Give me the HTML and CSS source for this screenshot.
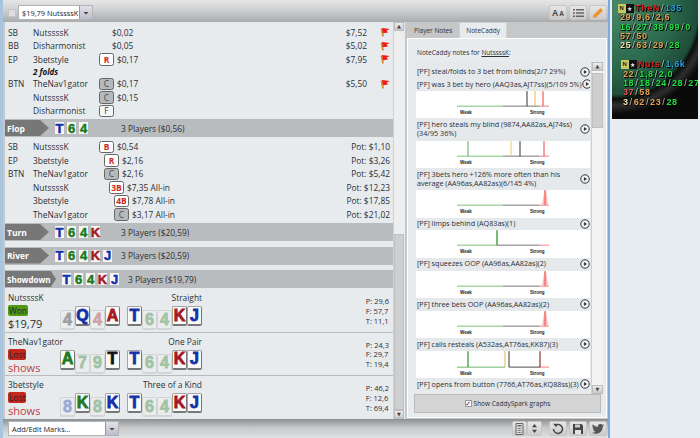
FILE: index.html
```html
<!DOCTYPE html>
<html lang="en">
<head>
<meta charset="utf-8">
<title>Hand replay</title>
<link rel="stylesheet" href="styles.css">
</head>
<body>
<svg class="sprite" xmlns="http://www.w3.org/2000/svg">
  <symbol id="flag" viewBox="0 0 10 10"><path d="M1.5 1.5 L3 9.5" stroke="#d08a30" stroke-width="1.8" fill="none"/><path d="M2 1 L9.8 2 L6.5 3.5 L8 5.5 L3 6.2 Z" fill="#f01818"/></symbol>
  <symbol id="play" viewBox="0 0 10 10"><circle cx="5" cy="5" r="4.2" fill="#f4f5f6" stroke="#333" stroke-width="1"/><path d="M3.9 2.9 L7 5 L3.9 7.1 Z" fill="#333"/></symbol>
  <symbol id="arrow" viewBox="0 0 8 8"><path d="M1.5 3 L6.5 3 L4 5.5 Z" fill="#444"/></symbol>
</svg>
<div class="desktop">
  <div class="window">
    <header class="topbar">
      <span class="check-off"></span>
      <div class="combo combo-top"><span class="combo-text">$19,79 NutssssK</span><span class="combo-btn"><svg width="8" height="8"><use href="#arrow"/></svg></span></div>
      <div class="tools">
        <button class="tool"><span class="aa">A<small>A</small></span></button>
        <button class="tool"><svg width="11" height="10" viewBox="0 0 11 10"><path d="M0 1h2v1.5H0zM3 1h8v1.5H3zM0 4.2h2v1.5H0zM3 4.2h8v1.5H3zM0 7.4h2v1.5H0zM3 7.4h8v1.5H3z" fill="#666"/></svg></button>
        <button class="tool"><svg width="12" height="12" viewBox="0 0 12 12"><path d="M8.5 1 L11 3.5 L4 10.5 L1 11 L1.500 8 Z" fill="#f0922a"/></svg></button>
      </div>
    </header>
    <main class="main">
      <section class="left">
        <div class="hand">
          <div class="street first">
            <div class="row"><span class="pos">SB</span><span class="name">NutssssK</span><span class="amt blind">$0,02</span><span class="stack">$7,52</span><svg class="flag"><use href="#flag"/></svg></div>
            <div class="row"><span class="pos">BB</span><span class="name">Disharmonist</span><span class="amt blind">$0,05</span><span class="stack">$5,02</span><svg class="flag"><use href="#flag"/></svg></div>
            <div class="row"><span class="pos">EP</span><span class="name">3betstyle</span><span class="act red">R</span><span class="amt">$0,17</span><span class="stack">$7,95</span><svg class="flag"><use href="#flag"/></svg></div>
            <div class="row folds"><span class="pos"></span><span class="fold-text">2 folds</span></div>
            <div class="row"><span class="pos">BTN</span><span class="name">TheNav1gator</span><span class="act call">C</span><span class="amt">$0,17</span><span class="stack">$5,50</span><svg class="flag"><use href="#flag"/></svg></div>
            <div class="row"><span class="pos"></span><span class="name">NutssssK</span><span class="act call">C</span><span class="amt">$0,15</span></div>
            <div class="row"><span class="pos"></span><span class="name">Disharmonist</span><span class="act fold">F</span></div>
          </div>
          <div class="band band-flop"><span class="tag">Flop</span><span class="board"><i class="c b">T</i><i class="c g">6</i><i class="c g">4</i></span><span class="players">3 Players ($0,56)</span></div>
          <div class="street">
            <div class="row"><span class="pos">SB</span><span class="name">NutssssK</span><span class="act red">B</span><span class="amt">$0,54</span><span class="pot">Pot: $1,10</span></div>
            <div class="row"><span class="pos">EP</span><span class="name">3betstyle</span><span class="act red in1">R</span><span class="amt">$2,16</span><span class="pot">Pot: $3,26</span></div>
            <div class="row"><span class="pos">BTN</span><span class="name">TheNav1gator</span><span class="act call in1">C</span><span class="amt">$2,16</span><span class="pot">Pot: $5,42</span></div>
            <div class="row"><span class="pos"></span><span class="name">NutssssK</span><span class="act red in2">3B</span><span class="amt">$7,35 All-in</span><span class="pot">Pot: $12,23</span></div>
            <div class="row"><span class="pos"></span><span class="name">3betstyle</span><span class="act red in3">4B</span><span class="amt">$7,78 All-in</span><span class="pot">Pot: $17,85</span></div>
            <div class="row"><span class="pos"></span><span class="name">TheNav1gator</span><span class="act call in3">C</span><span class="amt">$3,17 All-in</span><span class="pot">Pot: $21,02</span></div>
          </div>
          <div class="band"><span class="tag">Turn</span><span class="board"><i class="c b">T</i><i class="c g">6</i><i class="c g">4</i><i class="c r">K</i></span><span class="players">3 Players ($20,59)</span></div>
          <div class="band"><span class="tag">River</span><span class="board"><i class="c b">T</i><i class="c g">6</i><i class="c g">4</i><i class="c r">K</i><i class="c b">J</i></span><span class="players">3 Players ($20,59)</span></div>
          <div class="band band-last"><span class="tag tag-wide">Showdown</span><span class="board"><i class="c b">T</i><i class="c g">6</i><i class="c g">4</i><i class="c r">K</i><i class="c b">J</i></span><span class="players">3 Players ($19,79)</span></div>

          <div class="result">
            <div class="who"><div class="pname">NutssssK</div><div class="won">Won</div><div class="money">$19,79</div></div>
            <div class="hands">
              <div class="rank">Straight</div>
              <div class="cards"><i class="s k dim">4</i><i class="s b">Q</i><i class="s r dim">4</i><i class="s r">A</i><i class="gap"></i><i class="s b">T</i><i class="s g dim">6</i><i class="s g dim">4</i><i class="s r">K</i><i class="s b">J</i></div>
            </div>
            <div class="pct"><div>P: 29,6</div><div>F: 57,7</div><div>T: 11,1</div></div>
          </div>
          <div class="result">
            <div class="who"><div class="pname">TheNav1gator</div><div class="lost">Lost</div><div class="shows">shows</div></div>
            <div class="hands">
              <div class="rank">One Pair</div>
              <div class="cards"><i class="s g">A</i><i class="s g dim">7</i><i class="s g dim">9</i><i class="s k">T</i><i class="gap"></i><i class="s b">T</i><i class="s g dim">6</i><i class="s g dim">4</i><i class="s r">K</i><i class="s b">J</i></div>
            </div>
            <div class="pct"><div>P: 24,3</div><div>F: 29,7</div><div>T: 19,4</div></div>
          </div>
          <div class="result">
            <div class="who"><div class="pname">3betstyle</div><div class="lost">Lost</div><div class="shows">shows</div></div>
            <div class="hands">
              <div class="rank">Three of a Kind</div>
              <div class="cards"><i class="s b dim">8</i><i class="s g">K</i><i class="s g dim">8</i><i class="s b">K</i><i class="gap"></i><i class="s b">T</i><i class="s g dim">6</i><i class="s g dim">4</i><i class="s r">K</i><i class="s b">J</i></div>
            </div>
            <div class="pct"><div>P: 46,2</div><div>F: 12,6</div><div>T: 69,4</div></div>
          </div>
        </div>
        <div class="vbar"><span class="vbtn">▲</span><span class="vtrack"><span class="vthumb"></span></span><span class="vbtn">▼</span></div>
      </section>

      <section class="right">
        <nav class="tabs"><span class="tab">Player Notes</span><span class="tab tab-on">NoteCaddy</span></nav>
        <div class="pane">
          <div class="pane-title">NoteCaddy notes for <u>NutssssK</u>:</div>
          <div class="list-wrap">
            <div class="notes">
              <div class="note-h h-first"><span>[PF] steal/folds to 3 bet from blinds(2/7 29%)</span><svg class="play"><use href="#play"/></svg></div>
              <div class="note-h"><span>[PF] was 3 bet by hero (AAQ3as,AJT7ss)(5/109 5%)</span><svg class="play"><use href="#play"/></svg></div>
              <svg class="graph" viewBox="0 0 174 27"><path d="M41 15H87" stroke="#7fbf7f"/><path d="M87 15H123" stroke="#777"/><path d="M123 15H133" stroke="#f08080"/><path d="M111 0V15" stroke="#333"/><path d="M119 0V15" stroke="#f0b040"/><path d="M127 0V15" stroke="#f04040"/><text x="44" y="23">Weak</text><text x="114" y="23">Strong</text></svg>
              <div class="note-h h-two"><span>[PF] hero steals my blind (9874,AA82as,AJ74ss)<br>(34/95 36%)</span><svg class="play"><use href="#play"/></svg></div>
              <svg class="graph" viewBox="0 0 174 27"><path d="M41 15H87" stroke="#7fbf7f"/><path d="M87 15H123" stroke="#777"/><path d="M123 15H133" stroke="#f08080"/><path d="M52 0V15" stroke="#5aa85a"/><path d="M95 0V15" stroke="#f0c878"/><path d="M104 0V15" stroke="#333"/><path d="M128 0V15" stroke="#f04040"/><text x="44" y="23">Weak</text><text x="114" y="23">Strong</text></svg>
              <div class="note-h h-two"><span>[PF] 3bets hero +126% more often than his<br>average (AA96as,AA82as)(6/145 4%)</span><svg class="play"><use href="#play"/></svg></div>
              <svg class="graph" viewBox="0 0 174 27"><path d="M41 15H87" stroke="#7fbf7f"/><path d="M87 15H123" stroke="#777"/><path d="M123 15H133" stroke="#f08080"/><path d="M126 15L128.500 0H130L132 15Z" fill="#fbb"/><path d="M129 0V15" stroke="#f05050"/><text x="44" y="23">Weak</text><text x="114" y="23">Strong</text></svg>
              <div class="note-h"><span>[PF] limps behind (AQ83as)(1)</span><svg class="play"><use href="#play"/></svg></div>
              <svg class="graph" viewBox="0 0 174 27"><path d="M41 15H81" stroke="#7fbf7f"/><path d="M81 15H123" stroke="#777"/><path d="M123 15H133" stroke="#f08080"/><path d="M81 0V15" stroke="#3f9f3f" stroke-width="1.400"/><text x="44" y="23">Weak</text><text x="114" y="23">Strong</text></svg>
              <div class="note-h"><span>[PF] squeezes OOP (AA96as,AA82as)(2)</span><svg class="play"><use href="#play"/></svg></div>
              <svg class="graph" viewBox="0 0 174 27"><path d="M41 15H87" stroke="#7fbf7f"/><path d="M87 15H123" stroke="#777"/><path d="M123 15H133" stroke="#f08080"/><path d="M126 15L128.500 0H130L132 15Z" fill="#fbb"/><path d="M129 0V15" stroke="#f05050"/><text x="44" y="23">Weak</text><text x="114" y="23">Strong</text></svg>
              <div class="note-h"><span>[PF] three bets OOP (AA96as,AA82as)(2)</span><svg class="play"><use href="#play"/></svg></div>
              <svg class="graph" viewBox="0 0 174 27"><path d="M41 15H87" stroke="#7fbf7f"/><path d="M87 15H123" stroke="#777"/><path d="M123 15H133" stroke="#f08080"/><path d="M126 15L128.500 0H130L132 15Z" fill="#fbb"/><path d="M129 0V15" stroke="#f05050"/><text x="44" y="23">Weak</text><text x="114" y="23">Strong</text></svg>
              <div class="note-h"><span>[PF] calls resteals (A532as,AT76as,KK87)(3)</span><svg class="play"><use href="#play"/></svg></div>
              <svg class="graph" viewBox="0 0 174 27"><path d="M41 16H89" stroke="#9fcf9f" stroke-width="1.500"/><path d="M93 16H124" stroke="#888" stroke-width="1.500"/><path d="M124 16H133" stroke="#f8a8a8" stroke-width="1.500"/><path d="M52 0V16" stroke="#4f9f4f" stroke-width="1.400"/><path d="M89 0V16" stroke="#f0b040"/><path d="M93 0V16" stroke="#333"/><path d="M124 0V16" stroke="#903030" stroke-width="1.200"/><text x="44" y="24">Weak</text><text x="114" y="24">Strong</text></svg>
              <div class="note-h"><span>[PF] opens from button (7766,AT76as,KQ88ss)(3)</span><svg class="play"><use href="#play"/></svg></div>
            </div>
            <div class="vbar vbar-notes"><span class="vbtn">▲</span><span class="vtrack"><span class="vthumb"></span></span><span class="vbtn">▼</span></div>
          </div>
          <div class="spark"><span class="check-on">✓</span><span>Show CaddySpark graphs</span></div>
        </div>
      </section>
    </main>
    <footer class="bottombar">
      <div class="combo combo-bottom"><span class="combo-text">Add/Edit Marks...</span><span class="combo-btn"><svg width="8" height="8"><use href="#arrow"/></svg></span></div>
      <div class="tools">
        <div class="tool-pair">
          <button class="tool tool-s"><svg width="9" height="12" viewBox="0 0 9 12"><path d="M1 .5h7v11H1z" fill="#ddd" stroke="#666"/><path d="M2.500 2h4v1.500h-4zM2.500 5h1v1h-1zM4 5h1v1H4zM5.500 5h1v1h-1zM2.500 7h1v1h-1zM4 7h1v1H4zM5.500 7h1v1h-1zM2.500 9h1v1h-1zM4 9h1v1H4zM5.500 9h1v1h-1z" fill="#666"/></svg></button>
          <button class="tool tool-s"><svg width="7" height="11" viewBox="0 0 7 11"><path d="M3.500 1L6 4.300H1zM3.500 10L6 6.700H1z" fill="#444"/></svg></button>
        </div>
        <button class="tool"><svg width="12" height="12" viewBox="0 0 12 12"><path d="M3 2.600A4.500 4.500 0 1 1 1.500 6" fill="none" stroke="#444" stroke-width="1.500"/><path d="M1 .8L4.600.8 4.600 4.400Z" fill="#444"/></svg></button>
        <button class="tool"><svg width="12" height="12" viewBox="0 0 12 12"><path d="M1 1h8.500L11 2.500V11H1z" fill="#444"/><path d="M3 1.500h5v3H3z" fill="#ccc"/><path d="M3 7h6v4H3z" fill="#e4e4e4"/></svg></button>
        <button class="tool"><svg width="12" height="10" viewBox="0 0 24 20"><path d="M24 2.400a10 10 0 0 1-2.800.800 5 5 0 0 0 2.200-2.700 10 10 0 0 1-3.100 1.200 4.900 4.900 0 0 0-8.400 4.500A14 14 0 0 1 1.700 1a4.900 4.900 0 0 0 1.500 6.600 5 5 0 0 1-2.200-.6 4.900 4.900 0 0 0 3.900 4.900 5 5 0 0 1-2.200.1 4.900 4.900 0 0 0 4.600 3.400A10 10 0 0 1 0 17.400 14 14 0 0 0 7.500 19.600c9.100 0 14.300-7.700 14-14.600A10 10 0 0 0 24 2.400z" fill="#555"/></svg></button>
      </div>
    </footer>
  </div>
  <aside class="side">
    <div class="hud">
      <div class="hud-block">
        <div class="hud-line"><i class="seat">N</i><i class="star">★</i><b class="t-red">TheN</b><b class="t-w">/</b><b class="t-blue">135</b></div>
        <div class="hud-line ind"><b class="t-or">29</b><b class="t-w">/</b><b class="t-or">9,6</b><b class="t-w">/</b><b class="t-or">2,6</b></div>
        <div class="hud-line ind"><b class="t-gr">16</b><b class="t-w">/</b><b class="t-gr">27</b><b class="t-w">/</b><b class="t-gr">38</b><b class="t-w">/</b><b class="t-gr">99</b><b class="t-w">/</b><b class="t-gr">0</b></div>
        <div class="hud-line ind"><b class="t-or">57</b><b class="t-w">/</b><b class="t-or">50</b></div>
        <div class="hud-line ind"><b class="t-pale">25</b><b class="t-w">/</b><b class="t-or">63</b><b class="t-w">/</b><b class="t-or">29</b><b class="t-w">/</b><b class="t-gr">28</b></div>
      </div>
      <div class="hud-block hud-b2">
        <div class="hud-line"><i class="seat">N</i><i class="star">★</i><b class="t-red">Nuts</b><b class="t-w">/</b><b class="t-blue">1,6k</b></div>
        <div class="hud-line ind"><b class="t-or">22</b><b class="t-w">/</b><b class="t-gr">1,8</b><b class="t-w">/</b><b class="t-gr">2,0</b></div>
        <div class="hud-line ind"><b class="t-gr">18</b><b class="t-w">/</b><b class="t-gr">18</b><b class="t-w">/</b><b class="t-gr">24</b><b class="t-w">/</b><b class="t-gr">28</b><b class="t-w">/</b><b class="t-gr">27</b></div>
        <div class="hud-line ind"><b class="t-red2">37</b><b class="t-w">/</b><b class="t-or">58</b></div>
        <div class="hud-line ind"><b class="t-pale">3</b><b class="t-w">/</b><b class="t-or">62</b><b class="t-w">/</b><b class="t-or">23</b><b class="t-w">/</b><b class="t-gr">28</b></div>
      </div>
    </div>
  </aside>
</div>
</body>
</html>
```

FILE: styles.css
```css
* { box-sizing: border-box; }
html, body { margin: 0; padding: 0; height: 100%; overflow: hidden; }
body { font-family: "Open Sans", "Noto Sans", sans-serif; font-size: 8.4px; color: #2c2f33; background: #e8edf2; }
.sprite { display: none; }
i { font-style: normal; }

.desktop { display: flex; width: 700px; height: 438px; filter: blur(0.3px); }
.window { width: 610px; height: 438px; display: flex; flex-direction: column; border-left: 3px solid #a9c4dd; border-right: 2px solid #7fa9dc; background: #c6c7c8; }

.topbar { height: 22px; flex: none; display: flex; align-items: center; padding: 3px 0 0 5px; background: linear-gradient(#e6e6e6, #d2d3d4 40%, #a9abad); }
.check-off { width: 8px; height: 8px; margin-right: 2px; border: 1px solid #c4c4c4; background: #dedede; }
.combo { display: flex; background: #fff; border: 1px solid #b4b4b4; color: #222; font-size: 7.4px; height: 15px; align-items: center; }
.combo-text { flex: 1; padding-left: 3px; white-space: nowrap; overflow: hidden; }
.combo-btn { width: 13px; height: 100%; display: flex; align-items: center; justify-content: center; background: linear-gradient(#e2e2ec, #bcbccb); border-left: 1px solid #999; }
.combo-top { width: 75px; }
.combo-bottom { width: 111px; }
.tools { margin-left: auto; display: flex; gap: 2px; padding-right: 1px; }
.tool { width: 18px; height: 15px; padding: 0; border: 1px solid #c6c6c6; border-radius: 2px; background: linear-gradient(#e6e6e6, #cbcbcb); display: flex; align-items: center; justify-content: center; }
.aa { font: bold 8.5px "Liberation Sans", sans-serif; color: #444; }
.aa small { font-size: 6.5px; margin-left: 1px; }
.tool-pair { display: flex; margin-right: 5px; }
.tool-s { width: 15px; }

.main { flex: none; height: 397px; display: flex; padding-left: 2px; }
.left { width: 400px; flex: none; display: flex; background: #e8ebee; }
.hand { width: 388px; flex: none; padding-top: 3.5px; }
.vbar { width: 11px; flex: none; display: flex; flex-direction: column; background: #eee; border-left: 1px solid #d0d0d0; }
.vbtn { height: 9px; flex: none; font: 5px/7px "DejaVu Sans", sans-serif; text-align: center; color: #444; background: linear-gradient(#eee, #c8c8c8); border: 1px solid #bbb; }
.vtrack { flex: 1; display: flex; flex-direction: column; justify-content: flex-end; }
.vthumb { height: 176px; background: #cfcfcf; border: 1px solid #c0c0c0; }

.street { padding-bottom: 2px; }
.street.first { padding-bottom: 1.5px; }
.row { display: flex; align-items: center; height: 13.5px; padding-left: 3px; white-space: nowrap; }
.folds { height: 11px; }
.fold-text { font-weight: 700; font-style: italic; color: #111; font-size: 8px; }
.pos { width: 25px; flex: none; }
.name { width: 66px; flex: none; }
.act { width: 15px; height: 12.5px; flex: none; display: flex; align-items: center; justify-content: center; border: 1px solid #666; border-radius: 2.5px; font-size: 8.4px; font-weight: 700; }
.red { background: #fff; color: #d02a20; }
.call { background: #b6b9bc; color: #444; font-weight: 400; }
.fold { background: #f4f5f6; color: #444; font-weight: 400; }
.in1 { margin-left: 5px; }
.in2 { margin-left: 10px; }
.in3 { margin-left: 15px; }
.amt { margin-left: 3px; }
.amt.blind { margin-left: 13px; }
.stack { margin-left: auto; }
.flag { width: 10px; height: 10px; margin: 0 3px 0 13px; }
.pot { margin-left: auto; padding-right: 3px; }

.band { height: 18px; display: flex; align-items: center; background: #b9bcbf; margin-bottom: 5.5px; }
.band-flop { margin-bottom: 3px; }
.band-last { margin-bottom: 1px; }
.tag { width: 44px; height: 16px; flex: none; display: flex; align-items: center; padding-left: 2px; background: #777; color: #fff; font: bold 8.5px "Open Sans", sans-serif; clip-path: polygon(0 0, 80% 0, 100% 50%, 80% 100%, 0 100%); }
.tag-wide { width: 51px; font-size: 8px; clip-path: polygon(0 0, 90% 0, 100% 50%, 90% 100%, 0 100%); }
.board { display: flex; gap: 1px; margin-left: 5px; width: 67px; flex: none; }
.c { width: 11px; height: 14px; display: flex; align-items: center; justify-content: center; background: #f6f6f6; border: 1px solid #bbb; border-radius: 1px; font: bold 13px "Liberation Sans", sans-serif; -webkit-text-stroke: 0.5px currentColor; }
.b { color: #1230a8; }
.g { color: #1d7a1d; }
.r { color: #a31a22; }
.k { color: #111; }

.result { height: 43.5px; display: flex; border-bottom: 1px solid #b8babc; padding-left: 3px; }
.result:last-child { border-bottom: 0; }
.who { width: 52px; flex: none; padding-top: 3px; line-height: 11px; }
.pname { white-space: nowrap; height: 13px; }
.won, .lost { display: inline-block; height: 11px; line-height: 11px; padding: 0 1px; border-radius: 2px; color: #223; }
.won { background: #4f9a10; }
.lost { background: #c4281c; }
.money, .shows { font-size: 11px; line-height: 15px; }
.shows { color: #c0403c; }
.hands { width: 142px; flex: none; padding-top: 3px; }
.rank { text-align: right; line-height: 11px; height: 11px; }
.cards { display: flex; margin-top: 3px; }
.s { width: 15px; height: 20px; flex: none; display: flex; align-items: center; justify-content: center; background: #f8f8f8; border: 1px solid #a4a4a4; border-right-color: #777; border-bottom: 2px solid #777; border-radius: 2px; font: bold 16px "Liberation Sans", sans-serif; -webkit-text-stroke: 0.8px currentColor; }
.dim { opacity: 0.35; margin-top: 4px; border-color: #aaa; background: #eee; }
.gap { width: 7px; flex: none; }
.pct { margin-left: auto; padding: 8px 4px 0 0; font-size: 7.5px; line-height: 9.8px; }

.right { width: 200px; margin-left: 2px; flex: none; display: flex; flex-direction: column; height: 396px; font-size: 6.5px; }
.tabs { height: 16px; flex: none; display: flex; padding-left: 7px; gap: 9px; align-items: flex-end; }
.tab { height: 15px; line-height: 15px; white-space: nowrap; }
.tab-on { height: 16px; padding: 0 6px; margin-left: -2px; background: #e8ebee; border: 1px solid #cfd3d7; border-bottom: 0; border-radius: 2px 2px 0 0; }
.pane { flex: 1; min-height: 0; padding: 0 5px 4px 6px; background: #e8ebee; border: 1px solid #fff; display: flex; flex-direction: column; }
.pane-title { height: 23px; padding: 9px 0 0 3px; flex: none; line-height: 10px; }
.list-wrap { flex: none; height: 332px; display: flex; padding-left: 2px; }
.notes { width: 174px; flex: none; overflow: hidden; font-size: 7.2px; }
.note-h { display: flex; align-items: center; justify-content: space-between; min-height: 12.8px; line-height: 9.5px; padding-left: 1px; background: #e6e9ec; white-space: nowrap; }
.h-first { height: 16px; padding-top: 3px; }
.h-two { height: 22.5px; }
.play { width: 10px; height: 10px; flex: none; }
.graph { display: block; width: 174px; height: 27.3px; background: #fff; font: bold 4.5px "Liberation Sans", sans-serif; fill: #222; }
.vbar-notes { margin-left: 1px; width: 12px; background: #f4f4f4; }
.vbar-notes .vtrack { justify-content: flex-start; }
.vbar-notes .vthumb { height: 55px; margin-top: 2px; }
.spark { height: 19px; flex: none; display: flex; align-items: center; justify-content: center; gap: 2px; background: #d4d4d4; border: 1px solid #bbb; }
.check-on { width: 7px; height: 7px; display: flex; align-items: center; justify-content: center; background: #fff; border: 1px solid #999; color: #225; font: 7px "DejaVu Sans", sans-serif; }

.bottombar { height: 19px; flex: none; display: flex; align-items: center; padding-left: 5px; background: linear-gradient(#8e8f90, #c6c7c8 45%, #e0e1e2); }

.side { width: 90px; flex: none; padding-left: 2px; }
.hud { width: 86px; height: 119px; padding: 4px 0 0 6px; overflow: hidden; background: radial-gradient(ellipse 100px 108px at 5% 5%, #47866a 0, #2b6a4c 55%, #1f4d39 82%, #0b0f0d 86%, #2e2e2e 92%, #0a0a0a 100%); font: bold 9px "Liberation Sans", sans-serif; }
.hud-line { height: 9.3px; line-height: 9.3px; display: flex; white-space: nowrap; letter-spacing: 0.6px; text-shadow: 1px 1px 0 #000, -1px 0 0 rgba(0,0,0,.6); }
.hud-b2 { margin-top: 10px; padding-left: 3px; }
.ind { padding-left: 2px; }
.seat { width: 8px; height: 9px; background: #c8c860; color: #222; font-size: 6px; text-align: center; text-shadow: none; }
.star { width: 8px; height: 9px; margin-right: 1px; background: #111; color: #eee; font: 6px/9px "DejaVu Sans", sans-serif; text-align: center; text-shadow: none; }
.t-red { color: #e02020; }
.t-red2 { color: #f05050; }
.t-blue { color: #2aa0e0; }
.t-w { color: #bbb; margin: 0 1px; font-weight: 400; }
.t-or { color: #e6a050; }
.t-gr { color: #20e040; }
.t-pale { color: #f0e0b0; }
```
